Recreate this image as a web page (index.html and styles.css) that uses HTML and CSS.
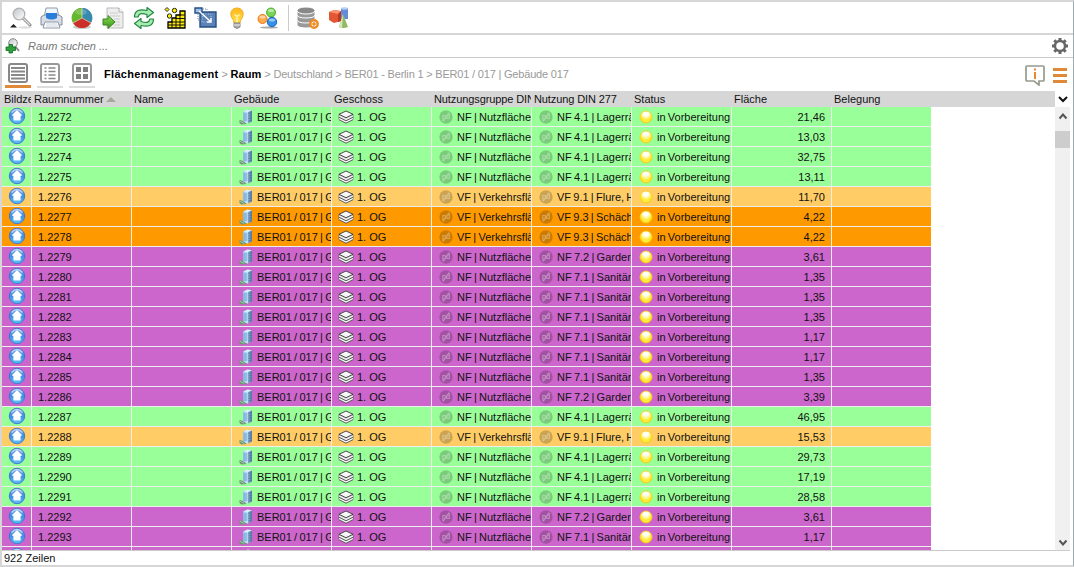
FILE: index.html
```html
<!DOCTYPE html>
<html lang="de">
<head>
<meta charset="utf-8">
<title>Flächenmanagement</title>
<link rel="stylesheet" href="styles.css">
</head>
<body>
<svg class="defs" aria-hidden="true">
<defs>
<linearGradient id="gBlue" x2="0" y2="1"><stop offset="0" stop-color="#7fa6e4"/><stop offset=".5" stop-color="#3d8ee8"/><stop offset="1" stop-color="#5cc4f8"/></linearGradient>
<radialGradient id="gYellow" cx=".5" cy=".3" r=".7"><stop offset="0" stop-color="#fffef0"/><stop offset=".4" stop-color="#fff6a0"/><stop offset=".7" stop-color="#ffe81e"/><stop offset="1" stop-color="#fbd000"/></radialGradient>
<linearGradient id="gLens" x2="1" y2="1"><stop offset="0" stop-color="#bfc4c8"/><stop offset="1" stop-color="#fff"/></linearGradient>
<linearGradient id="gGreen" x2="0" y2="1"><stop offset="0" stop-color="#8bdc54"/><stop offset="1" stop-color="#36951c"/></linearGradient>
<linearGradient id="gBulb" x2="0" y2="1"><stop offset="0" stop-color="#ffb619"/><stop offset="1" stop-color="#ffe34d"/></linearGradient>
<linearGradient id="gTower" x2="1" y2="0"><stop offset="0" stop-color="#8fc2ec"/><stop offset=".5" stop-color="#c4e4f8"/><stop offset=".6" stop-color="#86a8c8"/><stop offset="1" stop-color="#557ba5"/></linearGradient>
</defs>
<symbol id="home" viewBox="0 0 18 18"><circle cx="9" cy="9" r="7.700" fill="url(#gBlue)" stroke="#3f70c8" stroke-width=".9"/><path d="M9 3.800 13.300 8.200h-1.300v4.600H6V8.200H4.700z" fill="#fff" stroke="#fff" stroke-width="1.200" stroke-linejoin="round"/><path d="M3.500 5.500Q9-.5 14.500 5.500" fill="none" stroke="#d4e6fb" stroke-width="1.500" opacity=".7"/></symbol>
<symbol id="tower" viewBox="0 0 14 16"><path d="M4 2.500 9 .5l4 1V12.500l-4 2-5-1z" fill="url(#gTower)"/><path d="m4 2.500 5-2 4 1-4 1.500z" fill="#dceffb"/><path d="M4.500 5h4M4.500 7h4M4.500 9h4M4.500 11h4" stroke="#5a98ce" stroke-width=".8"/><path d="M9.500 4.500 13 3.500M9.500 7l3.500-1M9.500 9.500l3.500-1M9.500 12l3.500-1" stroke="#456b96" stroke-width=".6"/><path d="M.5 11c2 0 4 1.500 7 4l-5 .5L.5 14z" fill="#6b9670"/><path d="m1 12 4 2.500" stroke="#a7c9aa"/></symbol>
<symbol id="layers" viewBox="0 0 16 14"><path d="M1 9.500 8 6l7 3.500L8 13z" fill="#fff" stroke="#444" stroke-width=".9"/><path d="M1 4.300v5.200L8 13l7-3.500V4.300z" fill="#ccc" stroke="#555" stroke-width=".7"/><path d="m1 6 7 3.500L15 6M1 8.500 8 12l7-3.500" fill="none" stroke="#fff" stroke-width="1"/><path d="m1 7.200 7 3.500 7-3.500" fill="none" stroke="#444" stroke-width=".8"/><path d="M1 4.300 8 1l7 3.300L8 7.700z" fill="#f7f7f7" stroke="#3c3c3c" stroke-width=".9"/></symbol>
<symbol id="usage" viewBox="0 0 14 14"><circle cx="7" cy="7" r="6.700" fill="#000" opacity=".2"/><g fill="none" stroke="#fff" stroke-opacity=".32" stroke-width="1.100"><path d="M3.800 11V5.500h2.400v3.200H4M10.300 3v5.500H7.900V5.300h2.200M4.300 11.500l5.600-9"/></g></symbol>
<symbol id="lamp" viewBox="0 0 14 14"><circle cx="7" cy="7" r="6" fill="url(#gYellow)" stroke="#f4cf20" stroke-width=".8"/><ellipse cx="7" cy="4" rx="3.500" ry="2.300" fill="#fff" opacity=".8"/><path d="M4 10.500q3 2 6 0" fill="none" stroke="#fff36b"/></symbol>
</svg>
<div class="app">
<div class="toolbar">
<svg class="tool" viewBox="0 0 24 24"><ellipse cx="17" cy="21.500" rx="7" ry="1.200" fill="#ddd"/><path d="m15 12 7 7" stroke="#888" stroke-width="3" stroke-linecap="round"/><path d="m15 12 7 7" stroke="#e4e4e4" stroke-width="1.200"/><circle cx="11" cy="8" r="5.800" fill="url(#gLens)" stroke="#b0b0b0" stroke-width="1.300"/><path d="m2 21.500 3.500-3.500 3.500 3.500z" fill="#222"/></svg>
<svg class="tool" viewBox="0 0 24 24"><path d="M7 2h11l2 10H5z" fill="#f1f7fc" stroke="#8e9aaa"/><path d="M2 11l3-2h15l3 2v8H2z" fill="#d8dce6" stroke="#818a9e"/><path d="M7 6h11v6q-5.500 3-11 0z" fill="#287ed9"/><path d="M7 4h11v3H7z" fill="#edf8ff"/><path d="M6 16h13l2 6H4z" fill="#fff" stroke="#8e99a8"/><path d="M7 18h11M7 20h12" stroke="#ccd2da"/></svg>
<svg class="tool" viewBox="0 0 24 24"><ellipse cx="12" cy="21" rx="9" ry="2" fill="#ccc"/><circle cx="12" cy="12" r="10" fill="#d63b2e"/><path d="M12 12V2a10 10 0 0 0-9 15z" fill="#64b72e"/><path d="M12 12V2a10 10 0 0 1 9 15z" fill="#368bad"/><path d="m3 17 9-5 9 5q-3 5-9 5t-9-5" fill="#ca3027"/><path d="M12 2v10l-9 5m9-5 9 5" fill="none" stroke="#e0e2c7" stroke-width=".7"/><ellipse cx="11" cy="6" rx="6" ry="3" fill="#fff" opacity=".2"/></svg>
<svg class="tool" viewBox="0 0 24 24"><path d="M6 2h12l4 4v16H6z" fill="#eee" stroke="#bbb"/><path d="M18 2v4h4" fill="#fff" stroke="#aaa"/><path d="M9 7h8M9 10h10M13 13h6M14 16h5M12 19h7" stroke="#ccc"/><path d="M2 13h5V9.500l7 6.500-7 6.500V19H2z" fill="url(#gGreen)" stroke="#398421"/></svg>
<svg class="tool" viewBox="0 0 24 24"><g fill="#a5edae" stroke="#258746" stroke-width="1.200" stroke-linejoin="round"><path d="M2.500 11C2.500 4 8 3 15 4.500V1.500l6.500 5-6.500 5V8.500C10 7 7 7 6 11z"/><path d="M21.500 13c0 7-5.500 8-12.500 6.500v3l-6.500-5 6.500-5v3c5 1.500 8 1.500 9-2.500z"/></g></svg>
<svg class="tool" viewBox="0 0 24 24"><path d="M5 16h4v-4h4V9h4V5h5v17H5z" fill="#ffed00" stroke="#000" stroke-width="1.300"/><path d="M5 19h17M9 16h13M13 12.500h9M17 9h5M9 15v7M13 12v10M17 8v14" stroke="#111"/><g fill="#fff200" stroke="#222"><path d="m4 1.500 2 2-2 2-2-2z"/><circle cx="11.500" cy="4.500" r="2.200"/><circle cx="6.500" cy="10" r="2.200"/></g></svg>
<svg class="tool" viewBox="0 0 24 24"><path d="M6 6h16v15H6z" fill="#5c83b7" stroke="#264e83" stroke-width="1.400"/><path d="M1 2h7v5H1z" fill="#9ebde4" stroke="#264e83" stroke-width="1.400"/><path d="M9 3h4v3M4 8v6h2" fill="none" stroke="#718db7" stroke-dasharray="1 1"/><path d="M9 8h8v8H8z" fill="none" stroke="#b6cae5" stroke-dasharray="1 1.500"/><path d="m5 5 12 11m-4 0h4v-4" fill="none" stroke="#fff" stroke-width="1.400"/></svg>
<svg class="tool" viewBox="0 0 24 24"><path d="M9 17q0-3-2-5C4 7 7 2 12 2s8 5 5 10q-2 2-2 5z" fill="url(#gBulb)" stroke="#efac20"/><path d="M9.500 8.500l2.500 2 2.500-2m-2.500 2v6" fill="none" stroke="#fff8ba" stroke-width="1.300"/><path d="M9 17h6v4l-3 1.500L9 21z" fill="#aaa" stroke="#888"/><path d="M9 19h6" stroke="#eee"/></svg>
<svg class="tool" viewBox="0 0 24 24"><ellipse cx="13" cy="21.500" rx="9" ry="1" fill="#aaa"/><circle cx="15" cy="6.500" r="4.500" fill="#79d354" stroke="#4cad2d"/><circle cx="6.500" cy="13" r="4.500" fill="#ffa94b" stroke="#e77c18"/><circle cx="16" cy="16" r="4.700" fill="#3391ea" stroke="#1963bb"/><g fill="#fff" opacity=".5"><ellipse cx="15" cy="4.500" rx="3" ry="1.500"/><ellipse cx="6.500" cy="11" rx="3" ry="1.500"/><ellipse cx="16" cy="14" rx="3" ry="1.500"/></g></svg>
<span class="divider"></span>
<svg class="tool" viewBox="0 0 24 24"><g fill="#999" stroke="#fff"><path d="M1 15v4c0 4 18 4 18 0v-4"/><path d="M1 10v4c0 4 18 4 18 0v-4"/><path d="M1 4v5c0 4 18 4 18 0V4"/><ellipse cx="10" cy="4.500" rx="9" ry="3.500" fill="#888"/></g><circle cx="18" cy="18" r="3.700" fill="#fff" stroke="#ed8b22" stroke-width="2.400"/><path d="M18 15.800v4.400M15.800 18h4.400" stroke="#ed8b22" stroke-width="1.400"/></svg>
<svg class="tool" viewBox="0 0 24 24"><path d="M14 2h7v11h-7z" fill="#638bd8"/><ellipse cx="17.500" cy="2.500" rx="3.500" ry="1.200" fill="#b9cdf4"/><path d="m2 6 5-2 7 1v10l-7 2-5-3z" fill="#e35633"/><path d="m2 6 5-2 7 1-3 3z" fill="#ff936f"/><path d="m11 8 3-3v10l-3 1z" fill="#bd3820"/><path d="m16 8 5 13q-5 2-9 0z" fill="#92b868"/><path d="m16 8-1 14h-3z" fill="#d7e9b9"/></svg>
</div>
<div class="search">
<svg class="find" viewBox="0 0 16 18"><path d="m10 9 4 5" stroke="#888" stroke-width="2"/><circle cx="8" cy="6" r="4.300" fill="url(#gLens)" stroke="#888"/><path d="M4 7.500h3.500V10h3v3.500h-3V16H4v-2.500H1V10h3z" fill="#2ca33b" stroke="#116822" stroke-width=".8"/></svg>
<span>Raum suchen ...</span>
<svg class="gear" viewBox="0 0 16 16"><circle cx="8" cy="8" r="5" fill="none" stroke="#666" stroke-width="2.400"/><path d="M8 0v3m0 10v3M0 8h3m10 0h3M2.300 2.300l2.200 2.200m7 7 2.200 2.200m0-11.400-2.200 2.200m-7 7-2.200 2.200" stroke="#666" stroke-width="3"/></svg>
</div>
<div class="viewbar">
<div class="views">
<span class="view active"><svg viewBox="0 0 20 20"><rect x="1" y="1" width="18" height="18" rx="2" fill="#fff" stroke="#888" stroke-width="2"/><path d="M3 5h14M3 8.500h14M3 12h14M3 15.500h14" stroke="#888" stroke-width="1.800"/></svg></span>
<span class="view"><svg viewBox="0 0 20 20"><rect x="1" y="1" width="18" height="18" rx="2" fill="#fff" stroke="#999" stroke-width="2"/><path d="M4.500 5h2m2 0h7M4.500 8.500h2m2 0h7M4.500 12h2m2 0h7M4.500 15.500h2m2 0h7" stroke="#888" stroke-width="1.700"/></svg></span>
<span class="view"><svg viewBox="0 0 20 20"><rect x="1" y="1" width="18" height="18" rx="2" fill="#fff" stroke="#999" stroke-width="2"/><path d="M4 4h5v5H4zm7 0h5v5h-5zM4 11h5v5H4zm7 0h5v5h-5z" fill="#808080"/></svg></span>
</div>
<div class="crumbs"><b>Flächenmanagement</b> &gt; <b class="room">Raum</b> &gt; Deutschland &gt; BER01 - Berlin 1 &gt; BER01 / 017 | Gebäude 017</div>
<svg class="info" viewBox="0 0 20 21"><path d="M2 1h16q1 0 1 1v13q0 1-1 1h-4v4l-5-4H2q-1 0-1-1V2q0-1 1-1z" fill="#fff" stroke="#969b8d" stroke-width="1.700"/><path d="M10 3.500v2M10 7v7" stroke="#ed862c" stroke-width="2"/></svg>
<svg class="burger" viewBox="0 0 14 15"><path d="M0 1.500h14M0 7.500h14M0 13.500h14" stroke="#df8a38" stroke-width="3"/></svg>
</div>
<div class="head"><div class="columns">
<span class="narrow">Bildzeichen</span><span>Raumnummer<i class="sort"></i></span><span>Name</span><span>Gebäude</span><span>Geschoss</span><span class="group">Nutzungsgruppe DIN 277</span><span class="group">Nutzung DIN 277</span><span>Status</span><span>Fläche</span><span>Belegung</span></div>
<div class="picker"><svg viewBox="0 0 10 7"><path d="m1 1 4 4 4-4" fill="none" stroke="#111" stroke-width="2"/></svg></div></div>
<div class="body"><div class="rows" id="rows"></div>
<div class="scroll"><svg viewBox="0 0 10 7"><path d="m1.500 5.500 3.500-4 3.500 4" fill="none" stroke="#555" stroke-width="2"/></svg><div class="thumb"></div><svg class="down" viewBox="0 0 10 7"><path d="m1.500 1.500 3.500 4 3.500-4" fill="none" stroke="#555" stroke-width="2"/></svg></div></div>
<div class="status">922 Zeilen</div>
</div>
<script src="rows.js"></script>
</body>
</html>
```
FILE: styles.css
```css
* { box-sizing: border-box; }
body { margin: 0; background: #fff; color: #111; font: 11px/20px "Liberation Sans", Arial, sans-serif; }
svg { display: block; flex: none; }
.defs { position: absolute; width: 0; height: 0; }
.app { width: 1074px; height: 567px; overflow: hidden; display: flex; flex-direction: column; border: solid #d6d6d6; border-width: 2px 1px 2px 2px; border-right-color: #9eabb3; }
.toolbar { height: 33px; flex: none; display: flex; align-items: center; gap: 7px; padding: 0 0 0 6px; border-bottom: 2px solid #d6d6d6; }
.tool { width: 24px; height: 24px; }
.divider { width: 1px; height: 26px; background: #ccc; margin: 0 0 0 1px; }
.search { height: 23px; flex: none; display: flex; align-items: center; border-bottom: 1px solid #ccc; padding: 0 5px 0 3px; color: #777; font-style: italic; }
.find { width: 16px; height: 18px; margin-right: 7px; }
.gear { width: 16px; height: 16px; margin-left: auto; }
.viewbar { height: 33px; flex: none; display: flex; align-items: center; padding: 0 5px 0 3px; }
.views { display: flex; gap: 6px; align-self: flex-start; margin-top: 5px; }
.view { width: 26px; height: 25px; display: flex; justify-content: center; border-bottom: 2px solid #ddd; }
.view svg { width: 20px; height: 20px; }
.view.active { border-bottom: 3px solid #df8a38; }
.crumbs { margin: 0 0 2px 9px; color: #999; white-space: pre; letter-spacing: -.19px; }
.crumbs b { color: #000; letter-spacing: .3px; }
.crumbs .room { letter-spacing: .1px; }
.info { width: 20px; height: 21px; margin: 2px 8px 0 auto; }
.burger { width: 14px; height: 15px; margin: 2px 1px 0 0; }
.head { height: 16px; flex: none; display: flex; line-height: 17px; }
.columns { width: 1053px; display: flex; background: #d6d6d6; }
.columns > span { width: 100px; padding-left: 2px; border-right: 1px solid transparent; white-space: nowrap; overflow: hidden; }
.columns > .narrow { width: 30px; }
.columns > .group { letter-spacing: -.1px; }
.sort { display: inline-block; margin-left: 2px; vertical-align: 1px; border: 5px solid transparent; border-top: 0; border-bottom: 5px solid #aaa89d; }
.picker { width: 17px; padding: 5px 0 0 3px; }
.picker svg { width: 10px; height: 7px; }
.body { height: 444px; flex: none; display: flex; border-bottom: 1px solid #ccc; margin-right: 3px; }
.rows { flex: 1; overflow: hidden; }
.row { display: flex; width: 930px; height: 20px; }
.row.green { --fill: #9f9; }
.row.sand { --fill: #fc6; }
.row.orange { --fill: #f90; }
.row.violet { --fill: #c6c; }
.cell { width: 100px; flex: none; display: flex; align-items: center; background: var(--fill); border: solid #eee; border-width: 0 1px 1px 0; overflow: hidden; white-space: nowrap; padding-left: 6px; line-height: 19px; }
.cell:last-child { width: 99px; border-right: 0; }
.cell.mark { width: 30px; padding: 0 0 0 6px; }
.mark svg { width: 18px; height: 18px; margin-top: -1px; }
.cell span { margin-top: 1px; word-spacing: -.8px; }
.cell .layers + span { word-spacing: 0; }
.cell.area { justify-content: flex-end; padding-right: 6px; }
.icon { width: 14px; height: 14px; margin: 0 4px 0 1px; }
.icon.tower { width: 14px; height: 16px; margin-right: 4px; }
.icon.layers { width: 16px; height: 14px; margin: 0 3px 0 0; }
.scroll { width: 15px; background: #f0f0f0; display: flex; flex-direction: column; align-items: center; padding: 6px 0 4px; }
.scroll svg { width: 10px; height: 7px; }
.thumb { width: 15px; height: 17px; background: #cdcdcd; margin-top: 11px; }
.scroll .down { margin-top: auto; }
.status { padding-left: 2px; height: 14px; line-height: 15px; }
```
FILE: rows.js
```js
const usages = {
  L: ['green', 'NF | Nutzfläche', 'NF 4.1 | Lagerräume'],
  F: ['sand', 'VF | Verkehrsfläche', 'VF 9.1 | Flure, Hallen'],
  S: ['orange', 'VF | Verkehrsfläche', 'VF 9.3 | Schächte'],
  G: ['violet', 'NF | Nutzfläche', 'NF 7.2 | Garderoben'],
  N: ['violet', 'NF | Nutzfläche', 'NF 7.1 | Sanitärräume']
};
const kinds = 'LLLLFSSGNNNNNNGLFLLLGNN';
const areas = ['21,46','13,03','32,75','13,11','11,70','4,22','4,22','3,61','1,35','1,35','1,35','1,17','1,17','1,35','3,39','46,95','15,53','29,73','17,19','28,58','3,61','1,17','1,17'];
const cell = (icon, text) => `<div class="cell"><svg class="icon ${icon}"><use href="#${icon}"/></svg><span>${text}</span></div>`;
document.getElementById('rows').innerHTML = areas.map((area, i) => {
  const [color, group, usage] = usages[kinds[i]];
  // The 23rd row is cut off by the lower edge of the viewport.
  return `<div class="row ${color}"><div class="cell mark"><svg><use href="#home"/></svg></div><div class="cell"><span>1.${2272 + i}</span></div><div class="cell"></div>${cell('tower', 'BER01 / 017 | Gebäude')}${cell('layers', '1. OG')}${cell('usage', group)}${cell('usage', usage)}${cell('lamp', 'in Vorbereitung')}<div class="cell area"><span>${area}</span></div><div class="cell"></div></div>`;
}).join('');
```
